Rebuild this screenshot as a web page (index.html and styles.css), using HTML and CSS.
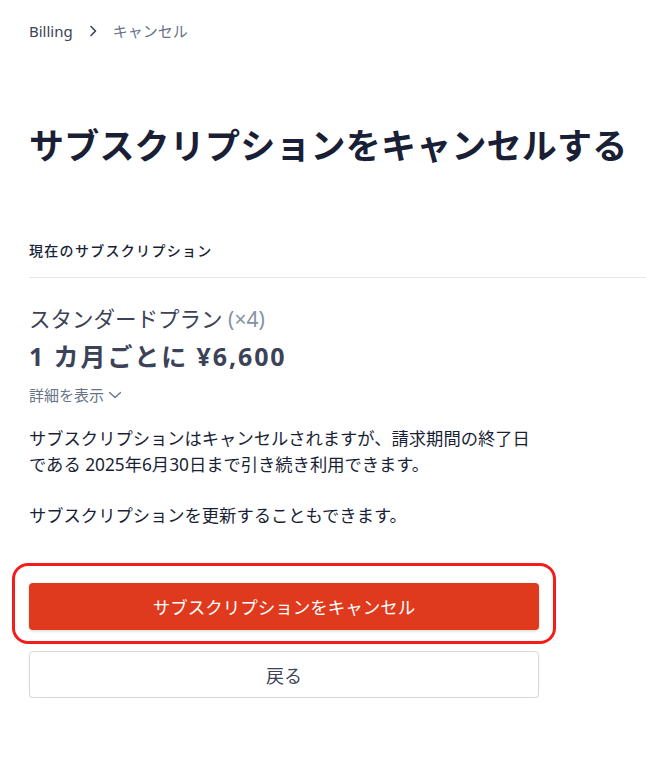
FILE: index.html
```html
<!DOCTYPE html>
<html lang="ja">
<head>
<meta charset="utf-8">
<link rel="stylesheet" href="styles.css">
</head>
<body>
<div class="page">
  <nav class="crumbs">
    <span class="crumb-link">Billing</span>
    <svg class="crumb-sep" width="10" height="14" viewBox="0 0 10 14"><path d="M3 2.5 L7.5 7 L3 11.5" fill="none" stroke="#3c4257" stroke-width="1.6" stroke-linecap="round" stroke-linejoin="round"/></svg>
    <span class="crumb-current">キャンセル</span>
  </nav>

  <h1 class="title">サブスクリプションをキャンセルする</h1>

  <div class="section-label">現在のサブスクリプション</div>
  <hr class="divider">

  <div class="plan">
    <div class="plan-name">スタンダードプラン <span class="qty">(×4)</span></div>
    <div class="plan-price">1 カ月ごとに ¥6,600</div>
    <div class="details">詳細を表示
      <svg width="14" height="10" viewBox="0 0 14 10"><path d="M1.5 2.5 L7 7.5 L12.5 2.5" fill="none" stroke="#697386" stroke-width="1.3" stroke-linecap="round" stroke-linejoin="round"/></svg>
    </div>
  </div>

  <p class="note">サブスクリプションはキャンセルされますが、請求期間の終了日<br>である 2025年6月30日まで引き続き利用できます。</p>
  <p class="note">サブスクリプションを更新することもできます。</p>

  <div class="actions">
    <div class="highlight-wrap">
      <button class="btn btn-danger">サブスクリプションをキャンセル</button>
      <div class="highlight"></div>
    </div>
    <button class="btn btn-secondary">戻る</button>
  </div>
</div>
</body>
</html>
```

FILE: styles.css
```css
* { box-sizing: border-box; }
html, body {
  margin: 0;
  padding: 0;
  background: #ffffff;
}
body {
  font-family: "Noto Sans", "Noto Sans CJK JP", sans-serif;
  color: #3c4257;
}
.page {
  padding: 20px 0 0 29px;
}
.crumbs {
  display: flex;
  align-items: center;
  height: 21px;
  font-size: 15px;
}
.crumb-link {
  color: #3c4257;
}
.crumb-sep {
  margin: 0 15px 0 15px;
}
.crumb-current {
  color: #697386;
}
.title {
  margin: 80px 0 0 0;
  font-size: 35px;
  font-weight: 700;
  line-height: 50px;
  color: #1a1f36;
  letter-spacing: 0.2px;
  white-space: nowrap;
}
.section-label {
  margin-top: 70px;
  font-size: 14px;
  font-weight: 500;
  line-height: 20px;
  color: #1a1f36;
  letter-spacing: 1.3px;
}
.divider {
  margin: 16px 0 0 0;
  border: none;
  border-top: 1px solid #e3e5e9;
  height: 0;
}
.plan {
  margin-top: 26px;
}
.plan-name {
  font-size: 21.5px;
  line-height: 30px;
  color: #3c4257;
}
.qty {
  color: #8792a2;
  font-size: 21px;
}
.plan-price {
  margin-top: 6px;
  font-size: 25px;
  font-weight: 700;
  line-height: 32px;
  color: #3c4257;
  letter-spacing: 1.9px;
}
.details {
  margin-top: 13px;
  font-size: 15px;
  line-height: 20px;
  color: #697386;
  display: flex;
  align-items: center;
  gap: 4px;
}
.note {
  margin: 21px 0 0 0;
  font-size: 17.3px;
  line-height: 26px;
  color: #1a1f36;
}
.note + .note {
  margin-top: 25px;
}
.actions {
  margin-top: 54px;
  width: 510px;
  display: flex;
  flex-direction: column;
  gap: 21px;
}
.highlight-wrap {
  position: relative;
}
.highlight {
  position: absolute;
  left: -17px;
  right: -17px;
  top: -20px;
  bottom: -14px;
  border: 3px solid #f51c1c;
  border-radius: 16px;
  pointer-events: none;
}
.btn {
  display: block;
  width: 100%;
  height: 47px;
  border-radius: 4px;
  font-family: "Noto Sans", "Noto Sans CJK JP", sans-serif;
  font-size: 17.5px;
  cursor: pointer;
}
.btn-danger {
  background: #df3a1d;
  color: #ffffff;
  border: none;
  font-weight: 400;
  box-shadow: 0 1px 3px rgba(0, 0, 0, 0.18);
}
.btn-secondary {
  background: #ffffff;
  color: #3c4257;
  border: 1px solid #d5d8de;
  font-size: 18px;
  font-weight: 400;
  box-shadow: 0 1px 2px rgba(0, 0, 0, 0.06);
}
```
